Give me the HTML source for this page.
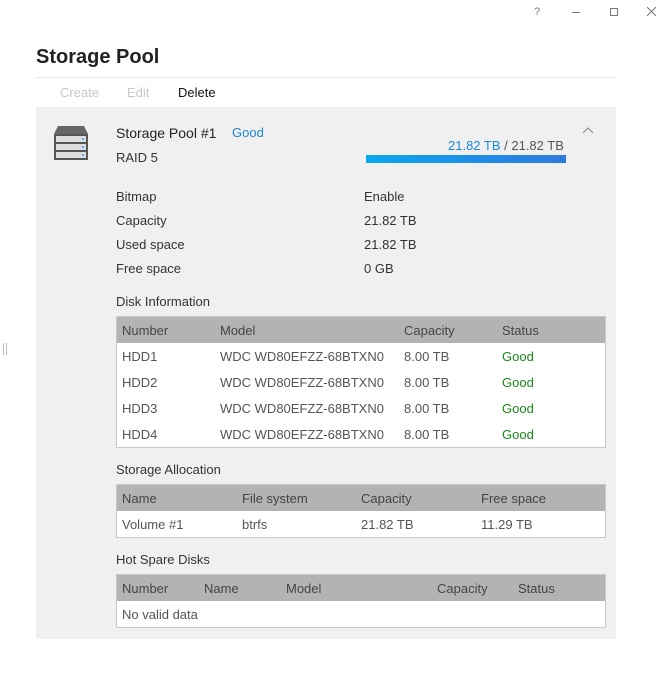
<!DOCTYPE html>
<html><head><style>
body{margin:0;width:670px;height:699px;background:#fff;font-family:"Liberation Sans",sans-serif;font-size:13px;color:#333;position:relative;overflow:hidden}
.a{position:absolute;white-space:nowrap}
.panel{position:absolute;left:36px;top:107px;width:580px;height:532px;background:#f0f0f0}
.tbl{position:absolute;left:116px;width:488px;border:1px solid #c8c8c8;background:#fff}
.hd{height:26px;background:#b3b3b3;position:relative}
.row{height:26px;position:relative}
.tbl .a{top:6px;color:#555}
.hd .a{color:#444}
.g{color:#1a8a1a!important}
</style></head><body>
<div class="a" style="left:534px;top:6px;color:#777;font-size:11px">?</div>
<div class="a" style="left:572px;top:12px;width:8px;height:1px;background:#777"></div>
<div class="a" style="left:610px;top:8px;width:6px;height:6px;border:1px solid #777"></div>
<svg class="a" style="left:647px;top:7px" width="9" height="9"><path d="M0 0L9 9M9 0L0 9" stroke="#777" stroke-width="1"/></svg>
<div class="a" style="left:3px;top:343px;height:12px;border-left:1px solid #bbb;border-right:1px solid #bbb;width:2px"></div>
<div class="a" style="left:36px;top:46px;font-size:20px;font-weight:bold;color:#222">Storage Pool</div>
<div class="a" style="left:36px;top:77px;width:580px;height:1px;background:#e8e8e8"></div>
<div class="a" style="left:60px;top:85px;color:#c8c8c8">Create</div>
<div class="a" style="left:127px;top:85px;color:#c8c8c8">Edit</div>
<div class="a" style="left:178px;top:85px;color:#111">Delete</div>
<div class="panel"></div>
<svg class="a" style="left:54px;top:126px" width="36" height="34"><path d="M4 0h26l4 8H0z" fill="#666"/><rect x="0" y="8" width="34" height="26" fill="#555"/><rect x="2" y="10" width="30" height="6" fill="#ddd"/><rect x="2" y="18" width="30" height="6" fill="#ddd"/><rect x="2" y="26" width="30" height="6" fill="#ddd"/><circle cx="29" cy="13" r="1" fill="#39f"/><circle cx="29" cy="21" r="1" fill="#39f"/><circle cx="29" cy="29" r="1" fill="#39f"/></svg>
<div class="a" style="left:116px;top:125px;font-size:14px;color:#222">Storage Pool #1</div>
<div class="a" style="left:232px;top:125px;color:#1a88d8">Good</div>
<div class="a" style="left:116px;top:150px">RAID 5</div>
<div class="a" style="left:448px;top:138px;color:#1a88d8">21.82 TB <span style="color:#555">/ 21.82 TB</span></div>
<div class="a" style="left:366px;top:155px;width:200px;height:8px;background:linear-gradient(90deg,#0aa6f0,#2f7ae0)"></div>
<svg class="a" style="left:582px;top:127px" width="12" height="7"><path d="M1 6L6 1L11 6" fill="none" stroke="#888" stroke-width="1"/></svg>
<div class="a" style="left:116px;top:189px">Bitmap</div><div class="a" style="left:364px;top:189px">Enable</div>
<div class="a" style="left:116px;top:213px">Capacity</div><div class="a" style="left:364px;top:213px">21.82 TB</div>
<div class="a" style="left:116px;top:237px">Used space</div><div class="a" style="left:364px;top:237px">21.82 TB</div>
<div class="a" style="left:116px;top:261px">Free space</div><div class="a" style="left:364px;top:261px">0 GB</div>
<div class="a" style="left:116px;top:294px">Disk Information</div>
<div class="tbl" style="top:316px">
<div class="hd"><span class="a" style="left:5px">Number</span><span class="a" style="left:103px">Model</span><span class="a" style="left:287px">Capacity</span><span class="a" style="left:385px">Status</span></div>
<div class="row"><span class="a" style="left:5px">HDD1</span><span class="a" style="left:103px">WDC WD80EFZZ-68BTXN0</span><span class="a" style="left:287px">8.00 TB</span><span class="a g" style="left:385px">Good</span></div>
<div class="row"><span class="a" style="left:5px">HDD2</span><span class="a" style="left:103px">WDC WD80EFZZ-68BTXN0</span><span class="a" style="left:287px">8.00 TB</span><span class="a g" style="left:385px">Good</span></div>
<div class="row"><span class="a" style="left:5px">HDD3</span><span class="a" style="left:103px">WDC WD80EFZZ-68BTXN0</span><span class="a" style="left:287px">8.00 TB</span><span class="a g" style="left:385px">Good</span></div>
<div class="row"><span class="a" style="left:5px">HDD4</span><span class="a" style="left:103px">WDC WD80EFZZ-68BTXN0</span><span class="a" style="left:287px">8.00 TB</span><span class="a g" style="left:385px">Good</span></div>
</div>
<div class="a" style="left:116px;top:462px">Storage Allocation</div>
<div class="tbl" style="top:484px">
<div class="hd"><span class="a" style="left:5px">Name</span><span class="a" style="left:125px">File system</span><span class="a" style="left:244px">Capacity</span><span class="a" style="left:364px">Free space</span></div>
<div class="row"><span class="a" style="left:5px">Volume #1</span><span class="a" style="left:125px">btrfs</span><span class="a" style="left:244px">21.82 TB</span><span class="a" style="left:364px">11.29 TB</span></div>
</div>
<div class="a" style="left:116px;top:552px">Hot Spare Disks</div>
<div class="tbl" style="top:574px">
<div class="hd"><span class="a" style="left:5px">Number</span><span class="a" style="left:87px">Name</span><span class="a" style="left:169px">Model</span><span class="a" style="left:320px">Capacity</span><span class="a" style="left:401px">Status</span></div>
<div class="row"><span class="a" style="left:5px">No valid data</span></div>
</div>
</body></html>
